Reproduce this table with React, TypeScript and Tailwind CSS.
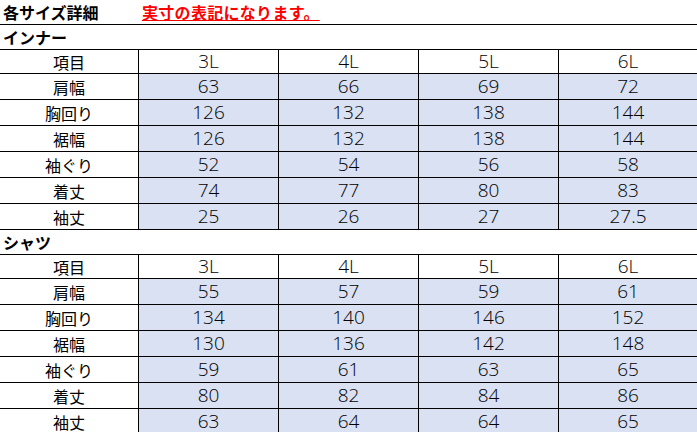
import React from "react";

interface SizeRow {
  label: string;
  values: string[];
}

const sizes = ["3L", "4L", "5L", "6L"];

const innerRows: SizeRow[] = [
  { label: "肩幅", values: ["63", "66", "69", "72"] },
  { label: "胸回り", values: ["126", "132", "138", "144"] },
  { label: "裾幅", values: ["126", "132", "138", "144"] },
  { label: "袖ぐり", values: ["52", "54", "56", "58"] },
  { label: "着丈", values: ["74", "77", "80", "83"] },
  { label: "袖丈", values: ["25", "26", "27", "27.5"] },
];

const shirtRows: SizeRow[] = [
  { label: "肩幅", values: ["55", "57", "59", "61"] },
  { label: "胸回り", values: ["134", "140", "146", "152"] },
  { label: "裾幅", values: ["130", "136", "142", "148"] },
  { label: "袖ぐり", values: ["59", "61", "63", "65"] },
  { label: "着丈", values: ["80", "82", "84", "86"] },
  { label: "袖丈", values: ["63", "64", "64", "65"] },
];

const jp = "font-['Noto_Sans_CJK_JP',sans-serif]";
const num = "font-['Open_Sans','Noto_Sans_CJK_JP',sans-serif] font-light";

const SizeTable: React.FC<{ rows: SizeRow[] }> = ({ rows }) => {
  return (
    <div>
      {/* Header */}
      <div className="flex h-[24px] border-b border-black">
        <div className={`w-[139px] shrink-0 border-r border-black flex items-center justify-center text-[16px] ${jp}`}>
          項目
        </div>
        {sizes.map((s, i) => (
          <div
            key={s}
            className={`${i < 3 ? "w-[140px] shrink-0 border-r border-black" : "flex-1"} flex items-center justify-center text-[19px] ${num}`}
          >
            {s}
          </div>
        ))}
      </div>

      {/* Data rows */}
      {rows.map((row) => (
        <div key={row.label} className="flex h-[26px] border-b border-black">
          <div className={`w-[139px] shrink-0 border-r border-black flex items-center justify-center text-[16px] ${jp}`}>
            {row.label}
          </div>
          {row.values.map((v, i) => (
            <div
              key={i}
              className={`${i < 3 ? "w-[140px] shrink-0 border-r border-black" : "flex-1"} bg-[#d9e1f2] flex items-center justify-center text-[19px] ${num}`}
            >
              {v}
            </div>
          ))}
        </div>
      ))}
    </div>
  );
};

export default function App() {
  return (
    <div className="w-[697px] h-[432px] overflow-hidden bg-white text-black">
      {/* Title */}
      <div className={`flex items-center h-[25px] border-b border-black ${jp}`}>
        <span className="w-[142px] shrink-0 pl-[3px] text-[16px] font-bold">各サイズ詳細</span>
        <span className="text-[16px] font-bold tracking-[0.3px] text-[#ff0000] underline underline-offset-[1px] decoration-[#ff0000]">
          実寸の表記になります。
        </span>
      </div>

      <div className={`h-[25px] border-b border-black flex items-center pl-[3px] text-[16px] font-bold ${jp}`}>
        インナー
      </div>
      <SizeTable rows={innerRows} />

      <div className={`h-[25px] border-b border-black flex items-center pl-[3px] text-[16px] font-bold ${jp}`}>
        シャツ
      </div>
      <SizeTable rows={shirtRows} />
    </div>
  );
}
